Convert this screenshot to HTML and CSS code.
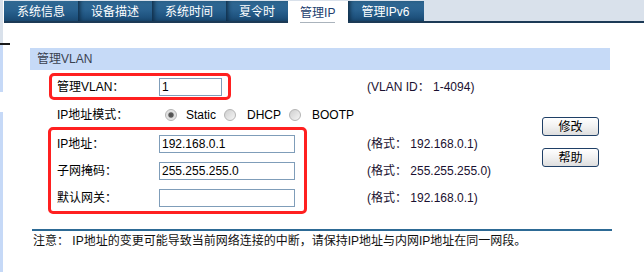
FILE: index.html
```html
<!DOCTYPE html>
<html lang="zh-CN">
<head>
<meta charset="utf-8">
<title>管理IP</title>
<link rel="stylesheet" href="styles.css">
</head>
<body>
<div class="page">
  <div class="strip">
    <div class="strip-top"></div>
    <div class="strip-line"></div>
    <div class="strip-blue strip-a"></div>
    <div class="strip-gap"></div>
    <div class="strip-blue strip-b"></div>
  </div>
  <div class="main">
    <nav class="tabs">
      <a class="tab">系统信息</a>
      <a class="tab">设备描述</a>
      <a class="tab">系统时间</a>
      <a class="tab">夏令时</a>
      <a class="tab active"><span>管理IP</span></a>
      <a class="tab">管理IPv6</a>
    </nav>
    <section class="panel">
      <div class="panel-head">管理VLAN</div>
      <div class="form">
        <div class="fields">
          <div class="group">
            <div class="lead">
              <div class="box box-vlan">
                <div class="row row-s"><label class="lbl">管理VLAN：</label><input class="inp inp-short" type="text" value="1"></div>
              </div>
            </div>
            <div class="formats">
              <div class="fmt row-s">(VLAN ID：&nbsp;1-4094)</div>
            </div>
          </div>
          <div class="mode">
            <span class="lbl">IP地址模式：</span>
            <span class="radio checked"></span><span class="opt">Static</span>
            <span class="radio"></span><span class="opt">DHCP</span>
            <span class="radio"></span><span class="opt">BOOTP</span>
          </div>
          <div class="group">
            <div class="lead">
              <div class="box box-ip">
                <div class="row row-l"><label class="lbl">IP地址：</label><input class="inp" type="text" value="192.168.0.1"></div>
                <div class="row row-l"><label class="lbl">子网掩码：</label><input class="inp" type="text" value="255.255.255.0"></div>
                <div class="row row-l"><label class="lbl">默认网关：</label><input class="inp" type="text" value=""></div>
              </div>
            </div>
            <div class="formats formats-ip">
              <div class="fmt row-l">(格式：&nbsp;192.168.0.1)</div>
              <div class="fmt row-l">(格式：&nbsp;255.255.255.0)</div>
              <div class="fmt row-l">(格式：&nbsp;192.168.0.1)</div>
            </div>
          </div>
        </div>
        <div class="buttons">
          <button class="btn" type="button">修改</button>
          <button class="btn" type="button">帮助</button>
        </div>
      </div>
      <div class="rule"></div>
      <p class="note">注意：&nbsp;IP地址的变更可能导致当前网络连接的中断，请保持IP地址与内网IP地址在同一网段。</p>
    </section>
  </div>
</div>
</body>
</html>
```

FILE: styles.css
```css
* { box-sizing: border-box; }

html, body {
  margin: 0;
  padding: 0;
  background: #ffffff;
}

body {
  font-family: "Liberation Sans", "Noto Sans CJK SC", sans-serif;
  font-size: 12px;
  line-height: 16px;
  color: #000;
}

.page {
  display: flex;
  width: 644px;
  height: 272px;
  overflow: hidden;
}

/* left frame strip */
.strip {
  width: 3px;
  flex: 0 0 3px;
  display: flex;
  flex-direction: column;
}
.strip-top { height: 43px; background: #d9e1eb; }
.strip-line { height: 2px; width: 10px; background: #1a1a1a; }
.strip-blue { background: #c6d9f7; }
.strip-a { height: 47px; }
.strip-gap { height: 20px; background: #ffffff; }
.strip-b { flex: 1; }

.main {
  flex: 1;
  margin-left: 1px;
  display: flex;
  flex-direction: column;
}

/* tabs */
.tabs {
  display: flex;
  align-items: flex-start;
  height: 23px;
  padding-top: 1px;
  background: #d9e1eb;
  border-bottom: 2px solid #1c3a56;
}
.tab {
  height: 20px;
  padding: 3px 13px 0;
  color: #ffffff;
  white-space: nowrap;
  background: linear-gradient(to bottom, #2f6892 0%, #2a6290 45%, #205581 75%, #1a4870 100%);
  box-shadow: inset 4px 0 4px -2px #0f2c46;
}
.tab:first-child { box-shadow: none; }
.tab.active {
  height: 22px;
  margin-bottom: -2px;
  padding: 4px 13px 0 12px;
  background: #ffffff;
  color: #22406e;
  box-shadow: none;
}
.tab.active span {
  display: block;
  border-bottom: 1px solid #aab3bc;
  padding-bottom: 1px;
}
.tab.active + .tab { padding-right: 15px; }

/* panel */
.panel {
  margin: 25px 0 0 26px;
  width: 580px;
}
.panel-head {
  height: 22px;
  padding: 3px 0 0 7px;
  background: #c6daf7;
  color: #3a4250;
}

.form {
  display: flex;
  margin-top: 3px;
}
.fields { width: 512px; }

.group { display: flex; }
.lead { width: 337px; flex: 0 0 337px; }

.box {
  border: 3px solid #ff2020;
  border-radius: 5px;
}
.box-vlan {
  margin-left: 19px;
  width: 182px;
  padding: 0 6px 0 5px;
}
.box-ip {
  margin-left: 18px;
  width: 259px;
  padding: 0 9px 0 6px;
}

.row {
  display: flex;
  align-items: center;
}
.row-s { height: 21px; }
.row-l { height: 27px; }

.lbl {
  width: 102px;
  flex: 0 0 102px;
}

.inp {
  width: 136px;
  height: 18px;
  margin: 0;
  padding: 0 2px;
  border: 1px solid #7f9db9;
  background: #ffffff;
  font: 12px/16px "Liberation Sans", "Noto Sans CJK SC", sans-serif;
  color: #000;
  outline: none;
}
.inp-short { width: 63px; }

.formats {
  padding-top: 3px;
  color: #1a1030;
}
.fmt {
  display: flex;
  align-items: center;
}

/* ip mode row */
.mode {
  display: flex;
  align-items: center;
  height: 24px;
  margin-top: 3px;
  padding-left: 27px;
}
.radio {
  width: 12px;
  height: 12px;
  margin-left: 6px;
  margin-right: 9px;
  border-radius: 50%;
  border: 1px solid #b4b4b4;
  background: linear-gradient(135deg, #cfcfcf 0%, #e4e4e4 55%, #f6f6f6 100%);
}
.radio.checked {
  background: radial-gradient(circle at center, #4e4e4e 0, #5a5a5a 2.2px, #dcdcdc 3.2px, #f2f2f2 100%);
}
.opt { margin-right: 2px; }
.opt + .radio { margin-left: 6px; margin-right: 11px; }

/* buttons */
.buttons {
  display: flex;
  flex-direction: column;
  gap: 12px;
  margin-top: 44px;
}
.btn {
  width: 57px;
  height: 19px;
  padding: 0;
  border: 1px solid #1f3f66;
  border-radius: 3px;
  background: linear-gradient(to bottom, #ffffff 0%, #f1f1f1 50%, #dedede 100%);
  font: 12px/16px "Liberation Sans", "Noto Sans CJK SC", sans-serif;
  color: #000;
}

.rule {
  margin: 15px 0 0 2px;
  width: 580px;
  height: 2px;
  background: #2d6a95;
}
.note {
  margin: 2px 0 0 3px;
  line-height: 16px;
  color: #111;
}
```
